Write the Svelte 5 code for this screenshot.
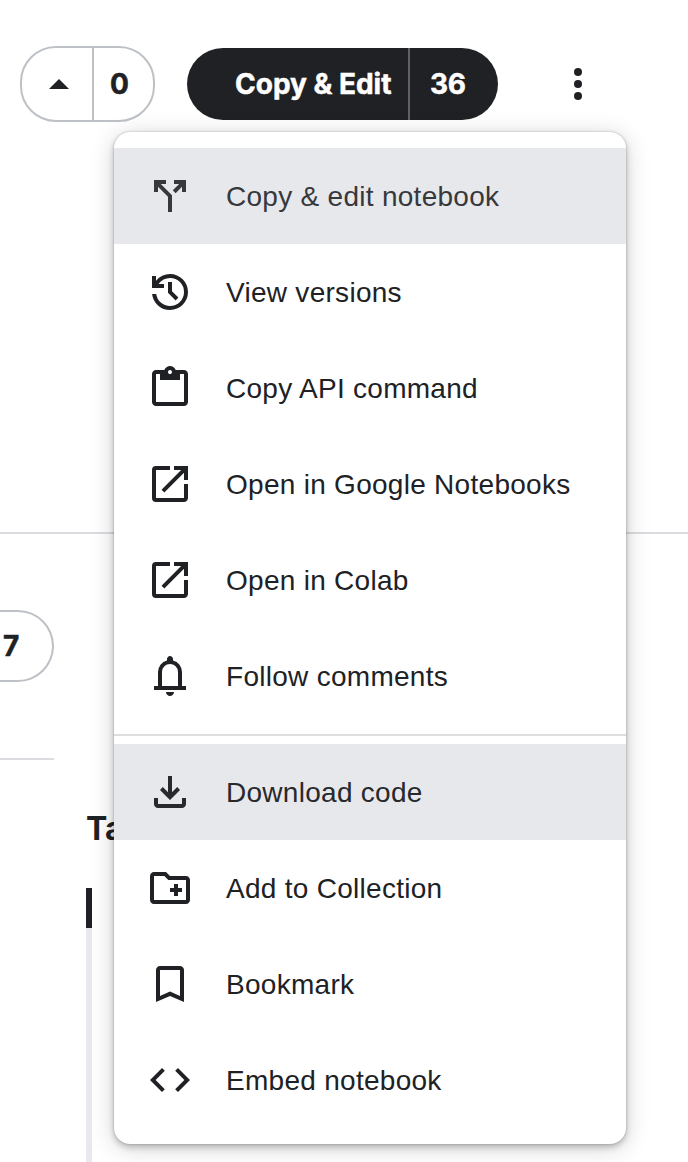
<script>
  const icons = {
    split: 'M11 20v-7.575l-5-5V10H4V4h6v2H7.4l5.6 5.6V20zm3.825-9.4L13.4 9.175 16.575 6H14V4h6v6h-2V7.425z',
    history: 'M12 21q-3.45 0-6.013-2.288T3.05 13H5.1q.35 2.6 2.313 4.3T12 19q2.925 0 4.963-2.037T19 12t-2.037-4.962T12 5q-1.725 0-3.225.8T6.25 8H9v2H3V4h2v2.35q1.275-1.6 3.113-2.475T12 3q1.875 0 3.513.713t2.85 1.924 1.925 2.85T21 12t-.712 3.513-1.925 2.85-2.85 1.925T12 21m2.8-4.8L11 12.4V7h2v4.6l3.2 3.2z',
    clipboard: 'M5 21q-.825 0-1.412-.587T3 19V5q0-.825.588-1.412T5 3h4.175q.275-.875 1.075-1.437T12 1q1 0 1.788.563T14.85 3H19q.825 0 1.413.588T21 5v14q0 .825-.587 1.413T19 21zm0-2h14V5h-2v3H7V5H5zm7-14q.425 0 .713-.288T13 4t-.288-.712T12 3t-.712.288T11 4t.288.713T12 5',
    open: 'M19 19H5V5h7V3H5a2 2 0 0 0-2 2v14a2 2 0 0 0 2 2h14c1.1 0 2-.9 2-2v-7h-2v7zM14 3v2h3.59l-9.83 9.83 1.41 1.41L19 6.41V10h2V3h-7z',
    bell: 'M4 19v-2h2v-7q0-2.075 1.25-3.687T10.5 4.2v-.7q0-.625.438-1.062T12 2t1.063.438T13.5 3.5v.7q2 .5 3.25 2.113T18 10v7h2v2zm8 3q-.825 0-1.412-.587T10 20h4q0 .825-.587 1.413T12 22m-4-5h8v-7q0-1.65-1.175-2.825T12 6 9.175 7.175 8 10z',
    download: 'm12 16-5-5 1.4-1.45 2.6 2.6V4h2v8.15l2.6-2.6L17 11zm-6 4q-.825 0-1.412-.587T4 18v-3h2v3h12v-3h2v3q0 .825-.587 1.413T18 20z',
    folder: 'M20 6h-8l-2-2H4c-1.11 0-1.99.89-1.99 2L2 18c0 1.11.89 2 2 2h16c1.11 0 2-.89 2-2V8c0-1.11-.89-2-2-2zm0 12H4V6h5.17l2 2H20v10zm-8-4h2v2h2v-2h2v-2h-2v-2h-2v2h-2v2z',
    bookmark: 'M5 21V5q0-.825.588-1.412T7 3h10q.825 0 1.413.588T19 5v16l-7-3zm2-3.05 5-2.15 5 2.15V5H7z',
    code: 'm8 18-6-6 6-6 1.425 1.425-4.6 4.6L9.4 16.6zm8 0-1.425-1.425 4.6-4.6L14.6 7.4 16 6l6 6z'
  };

  const groups = [
    [
      { icon: 'split', label: 'Copy & edit notebook', state: 'focused' },
      { icon: 'history', label: 'View versions' },
      { icon: 'clipboard', label: 'Copy API command' },
      { icon: 'open', label: 'Open in Google Notebooks' },
      { icon: 'open', label: 'Open in Colab' },
      { icon: 'bell', label: 'Follow comments' }
    ],
    [
      { icon: 'download', label: 'Download code', state: 'hovered' },
      { icon: 'folder', label: 'Add to Collection' },
      { icon: 'bookmark', label: 'Bookmark' },
      { icon: 'code', label: 'Embed notebook' }
    ]
  ];
</script>

<div class="page">
  <header>
    <div class="votes">
      <button class="up" aria-label="Upvote">
        <svg width="20" height="10" viewBox="0 0 20 10"><path d="M0 10 10 0l10 10z" /></svg>
      </button>
      <span class="count">0</span>
    </div>
    <div class="fork">
      <button class="fork-label">Copy &amp; Edit</button>
      <span class="fork-count">36</span>
    </div>
    <button class="more" aria-label="More">
      <svg width="8" height="32" viewBox="0 0 8 32">
        <circle cx="4" cy="4" r="4" /><circle cx="4" cy="16" r="4" /><circle cx="4" cy="28" r="4" />
      </svg>
    </button>
  </header>

  <main>
    <div class="tags"><span class="tag">7</span></div>
    <section class="contents">
      <h2>Table of Contents</h2>
      <div class="track"><div class="thumb"></div></div>
    </section>
  </main>

  <div class="menu" role="menu">
    {#each groups as group, i}
      {#if i > 0}<hr />{/if}
      {#each group as item}
        <div class="item {item.state ?? ''}" role="menuitem" tabindex="-1">
          <svg width="48" height="48" viewBox="0 0 24 24"><path d={icons[item.icon]} /></svg>
          <span>{item.label}</span>
        </div>
      {/each}
    {/each}
  </div>
</div>

<style>
  :global(body) { margin: 0; background: #fff; }
  .page {
    position: relative;
    width: 688px;
    height: 1162px;
    overflow: hidden;
    box-sizing: border-box;
    color: #202124;
    font-family: Inter, sans-serif;
    background: #fff;
  }
  svg { display: block; fill: currentColor; }
  button { border: 0; margin: 0; padding: 0; background: none; color: inherit; font: inherit; }
  header {
    display: flex;
    align-items: center;
    box-sizing: border-box;
    height: 534px;
    padding: 46px 20px 410px;
    border-bottom: 2px solid #dadce0;
    font-size: 28px;
    font-weight: 700;
    -webkit-text-stroke: 0.5px currentColor;
  }
  .votes {
    display: flex;
    box-sizing: border-box;
    width: 135px;
    height: 76px;
    border: 2px solid #bdc1c6;
    border-radius: 36px;
  }
  .up { display: flex; align-items: center; justify-content: center; width: 72px; padding-left: 3px; border-right: 2px solid #bdc1c6; box-sizing: border-box; }
  .count { flex: 1; line-height: 72px; text-align: center; padding-right: 8px; }
  .fork {
    display: flex;
    width: 311px;
    height: 72px;
    margin-left: 32px;
    border-radius: 36px;
    background: #202124;
    color: #fff;
    line-height: 72px;
    letter-spacing: -0.3px;
  }
  .fork-label { box-sizing: border-box; width: 223px; padding-left: 48px; text-align: left; white-space: nowrap; border-right: 2px solid #5f6368; }
  .fork-count { padding-left: 20px; }
  .more { margin-left: 76px; }
  main { display: flex; align-items: flex-start; gap: 32px; }
  .tags {
    box-sizing: border-box;
    width: 54px;
    height: 226px;
    padding-top: 76px;
    border-bottom: 2px solid #dadce0;
  }
  .tag {
    display: block;
    box-sizing: border-box;
    height: 72px;
    padding-left: 3px;
    border: solid #bdc1c6;
    border-width: 2px 2px 2px 0;
    border-radius: 0 36px 36px 0;
    font-size: 28px;
    font-weight: 700;
    line-height: 68px;
    -webkit-text-stroke: 0.5px currentColor;
  }
  .contents { padding-top: 275px; }
  h2 { margin: 0; font-size: 32px; font-weight: 700; line-height: 40px; white-space: nowrap; }
  .track { width: 6px; height: 280px; margin-top: 39px; background: #e8e9ef; }
  .thumb { height: 40px; background: #202124; }
  .menu {
    position: absolute;
    left: 114px;
    top: 132px;
    box-sizing: border-box;
    width: 512px;
    height: 1012px;
    padding: 16px 0;
    border-radius: 16px;
    background: #fff;
    box-shadow: 0 0 2px rgba(0, 0, 0, .26), 0 3px 6px rgba(0, 0, 0, .22), 0 4px 24px rgba(0, 0, 0, .18);
    font-family: "Liberation Sans", Arial, sans-serif;
    font-size: 28px;
    letter-spacing: 0.28px;
  }
  .item { display: flex; align-items: center; gap: 32px; height: 96px; padding-left: 32px; white-space: nowrap; }
  .item span { padding-top: 2px; }
  .focused { background: #e7e8ec; color: #37383c; }
  .hovered { background: #e7e8ec; color: #28292d; }
  hr { height: 2px; margin: 10px 0 8px; border: 0; background: #dedede; }
</style>
